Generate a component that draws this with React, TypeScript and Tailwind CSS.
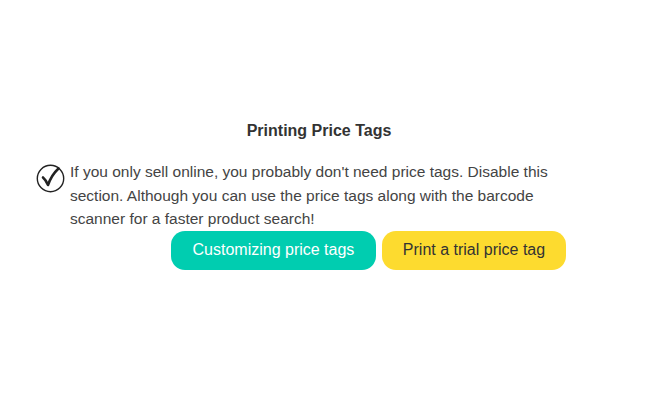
export default function App() {
  return (
    <div className="min-h-[409px] w-[656px] bg-white font-['Liberation_Sans',Arial,sans-serif]">
      <div className="w-[602px] pl-[36px] pt-[120px]">
        <h2 className="text-center text-[16px] font-bold leading-[22px] text-[#333]">Printing Price Tags</h2>

        <div className="mt-[18px] flex items-start gap-[5px]">
          <svg width="29" height="29" viewBox="0 0 29 29" className="mt-[4px] shrink-0">
            <circle cx="14.5" cy="14.5" r="13.2" fill="none" stroke="#222" strokeWidth="1.4" />
            <path d="M7 13.5 Q9.5 15.5 12 21 Q15.5 11 22.5 4.5" fill="none" stroke="#222" strokeWidth="2.6" strokeLinecap="round" strokeLinejoin="round" />
          </svg>
          <p className="w-[515px] text-[15.5px] leading-[23.5px] text-[#444]">
            If you only sell online, you probably don't need price tags. Disable this section. Although you can use the
            price tags along with the barcode scanner for a faster product search!
          </p>
        </div>

        <div className="flex gap-[6px] pl-[135px]">
          <button className="h-[39px] whitespace-nowrap rounded-[14px] bg-[#00cdb0] px-[21.5px] text-[16px] text-white">
            Customizing price tags
          </button>
          <button className="h-[39px] whitespace-nowrap rounded-[14px] bg-[#fddb2f] px-[21px] text-[16px] text-[#333]">
            Print a trial price tag
          </button>
        </div>
      </div>
    </div>
  );
}
